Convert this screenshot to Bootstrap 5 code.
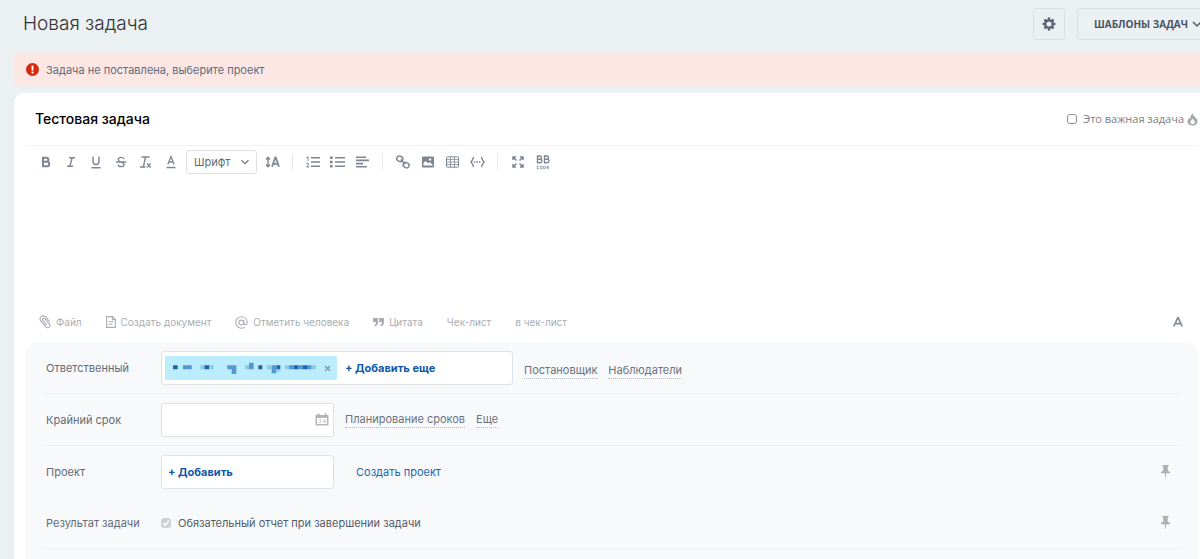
<!DOCTYPE html>
<html lang="ru">
<head>
<meta charset="utf-8">
<meta name="viewport" content="width=device-width, initial-scale=1">
<title>Новая задача</title>
<link href="https://cdn.jsdelivr.net/npm/bootstrap@5.3.0/dist/css/bootstrap.min.css" rel="stylesheet">
<style>
body{background:#ebf0f3;font-family:Inter,"Liberation Sans",sans-serif;font-size:11px;line-height:16px;color:#636a78;overflow-x:hidden}
.page-head{height:54px;padding:0 0 6px 23px}
.page-head h1{font-size:19px;line-height:28px;font-weight:300;color:#333}
.head-btn{height:32px;border:1px solid #d9dee2;border-radius:3px;padding:0;color:#525c69}
.gear-btn{width:32px;margin-right:12px}
.tpl-btn{width:132px;margin-right:-9px;padding-left:16px;font:700 10px/16px "Open Sans",sans-serif;color:#4a5363}
.notice{margin-left:14px;height:31px;padding-left:12px;gap:7px;background:#fce7e5;border-radius:4px 0 0 4px}
.task-card{margin:8px 0 0 14px;border-radius:10px 0 0 0;background:#fff}
.task-top{margin:0 2px 0 12px;padding:0 0 0 9px;height:53px;border-bottom:1px solid #f1f2f4}
.task-name{border:0;padding:0;font-size:14px;line-height:20px;font-weight:500;color:#000;background:none}
.important{font:11px/16px "Open Sans",sans-serif;color:#7d8085;padding-left:6px;gap:3px}
.tick{width:10px;height:10px;margin:0;border:1px solid #8c9096;border-radius:2px;flex:none}
.tools{padding:4px 0 0 19px}
.tool{width:25px;height:24px;padding:0;border:0;background:none;color:#7f8792;display:flex;align-items:center;justify-content:center;flex:none}
.sep{width:1px;height:16px;background:#e6e8eb;margin:0 7px}
.font-pick{width:71px;height:24px;margin:0 3px;padding:0 20px 0 7px;border:1px solid #dfe0e3;border-radius:3px;font-size:11px;line-height:16px;color:#636a78;background-size:10px 10px;background-position:right 6px center;background-image:url("data:image/svg+xml,%3csvg xmlns='http://www.w3.org/2000/svg' viewBox='0 0 10 10'%3e%3cpath fill='none' stroke='%23737b87' stroke-width='1.3' d='M1.5 3.2 5 6.7l3.5-3.5'/%3e%3c/svg%3e")}
.editor{height:140px;border:0;resize:none;padding:8px 32px;outline:0;font-size:13px}
.actions{padding:0 16px 0 25px;height:29px}
.act{padding:0;border:0;background:none;color:#a8adb4;font-size:10px;line-height:16px;display:flex;align-items:center;gap:5px;margin-right:24px;white-space:nowrap}
.fields{margin:0 2px 0 11px;padding:0 20px 16px 21px;background:#f8f9fb;border-radius:10px 10px 0 0}
.field-row{min-height:51px}
.ruled{border-bottom:1px solid #eef0f2;min-height:52px}
.first-row{min-height:51px}
.field-name{width:115px;flex:none}
.box{height:34px;border:1px solid #dfe2e6;border-radius:3px;background:#fff}
.box-wide{width:352px;padding:0 3px}
.box-short{width:173px}
.date-in{border:0;background:none;width:140px;padding:0 8px}
.add-in{padding-left:6px}
.chip{width:172px;height:24px;padding:0 6px 0 8px;background:#bcedfc;border-radius:2px}
.plain{border:0;background:none;padding:0;line-height:16px}
.add{color:#1058ad;font-weight:700;font-size:11px}
.dotted{color:#6a7280;text-decoration:none;border-bottom:1px dotted #b5bac2;line-height:15px;margin-left:11px}
.people{margin-top:6px}
.make{color:#2067b0;text-decoration:none;margin-left:22px}
.tick:disabled{opacity:1;background-color:#cfd0d2;border-color:#cfd0d2;background-size:10px 10px;background-image:url("data:image/svg+xml,%3csvg xmlns='http://www.w3.org/2000/svg' viewBox='0 0 10 10'%3e%3cpath fill='none' stroke='%23fff' stroke-width='1.4' d='M2 5.200 4.200 7.300 8 2.700'/%3e%3c/svg%3e")}
.report{color:#555c69;padding-left:7px}
.form-check-input:disabled~.report{opacity:1}
svg{display:block;flex:none}
</style>
</head>
<body>
<header class="page-head d-flex align-items-center overflow-hidden">
  <h1 class="m-0 me-auto">Новая задача</h1>
  <button class="btn head-btn gear-btn d-flex align-items-center justify-content-center flex-shrink-0" type="button" aria-label="Настройки">
    <svg width="14" height="14" viewBox="0 0 14 14" fill="none" stroke="#525c69"><circle cx="7" cy="7" r="3.7" stroke-width="2.2"/><path stroke-width="2.4" d="M7 .6v2M7 11.4v2M.6 7h2M11.4 7h2M2.5 2.5l1.3 1.3M10.2 10.2l1.3 1.3M2.5 11.5l1.3-1.3M10.2 3.8l1.3-1.3"/></svg>
  </button>
  <button class="btn head-btn tpl-btn d-flex align-items-center gap-1 flex-shrink-0 text-nowrap" type="button">ШАБЛОНЫ ЗАДАЧ
    <svg width="10" height="8" viewBox="0 0 10 8" fill="none" stroke="#525c69" stroke-width="1.5"><path d="M1 2l4 4 4-4"/></svg>
  </button>
</header>

<div class="notice d-flex align-items-center" role="alert">
  <svg width="13" height="13" viewBox="0 0 13 13"><circle cx="6.500" cy="6.500" r="6.500" fill="#d7290b"/><path stroke="#fff" stroke-width="1.900" d="M6.500 2.500v5M6.500 8.600v1.900"/></svg>
  <span>Задача не поставлена, выберите проект</span>
</div>

<main class="task-card">
  <div class="task-top d-flex align-items-center">
    <input class="task-name flex-grow-1" type="text" value="Тестовая задача" aria-label="Название задачи">
    <input class="form-check-input tick" type="checkbox" id="imp">
    <label class="important d-flex align-items-center" for="imp">Это важная задача
      <svg width="11" height="13" viewBox="0 0 11 13"><path fill="#a5a9ae" fill-rule="evenodd" d="M5.800.5C6 2.500 7.200 3.200 8.500 4.500c1.200 1.200 2 2.300 2 4C10.500 11 8.300 12.700 5.500 12.700S.5 11 .5 8.500c0-1.500.8-2.800 1.700-3.700.2.800.5 1.200 1 1.500C3 4 3.800 1.600 5.800.5zM5.700 5.600C5.200 7 3.400 7.700 3.400 9.300c0 1.300 1 2 2.200 2s2.200-.7 2.200-2c0-1.500-1.700-2.200-2.100-3.700z"/></svg>
    </label>
  </div>

  <div class="tools d-flex align-items-center" role="toolbar" aria-label="Форматирование">
    <button class="tool" type="button" aria-label="Полужирный"><svg width="10" height="12" viewBox="0 0 10 12" fill="none" stroke="currentColor" stroke-width="2"><path d="M2 1.800h3.400a2 2 0 0 1 0 4H2zM2 5.800h4a2.200 2.200 0 0 1 0 4.400H2z"/></svg></button>
    <button class="tool" type="button" aria-label="Курсив"><svg width="10" height="12" viewBox="0 0 10 12" fill="none" stroke="currentColor" stroke-width="1.400"><path d="M3 1.700h6M1 10.300h6M6.200 1.700L3.800 10.300"/></svg></button>
    <button class="tool" type="button" aria-label="Подчёркнутый"><svg width="10" height="14" viewBox="0 0 10 14" fill="none" stroke="currentColor" stroke-width="1.400"><path d="M2 1.500v5a3 3 0 0 0 6 0v-5M.5 12.700h9"/></svg></button>
    <button class="tool" type="button" aria-label="Зачёркнутый"><svg width="10" height="12" viewBox="0 0 10 12" fill="none" stroke="currentColor" stroke-width="1.300"><path d="M8 3C7.500 1.800 6.500 1.400 5 1.400 3.200 1.400 2.200 2.300 2.200 3.500 2.200 4.700 3 5.300 5 6c2 .5 3 1 3 2.400 0 1.400-1.200 2.200-3 2.200S2.200 9.900 2 8.600M0 6h10"/></svg></button>
    <button class="tool" type="button" aria-label="Очистить формат"><svg width="13" height="14" viewBox="0 0 13 14" fill="none" stroke="currentColor" stroke-width="1.400"><path d="M2.500 2h8M6.500 2L4.500 11.500M1 12h5.500M8 8.500l3.700 4M11.700 8.500l-3.700 4"/></svg></button>
    <button class="tool" type="button" aria-label="Цвет текста"><svg width="10" height="14" viewBox="0 0 10 14" fill="none" stroke="currentColor" stroke-width="1.300"><path d="M1.800 9.500L5 1.500l3.200 8M2.900 7h4.200M.5 12.500h9"/></svg></button>
    <select class="form-select font-pick" aria-label="Шрифт"><option>Шрифт</option></select>
    <button class="tool" type="button" aria-label="Размер шрифта"><svg width="15" height="12" viewBox="0 0 15 12" fill="none" stroke="currentColor" stroke-width="1.400"><path d="M3 2v8M1 3.500L3 1.300l2 2.200M1 8.500l2 2.200 2-2.200"/><path stroke-width="1.800" d="M7 10.800L10.300 1.500h.4L14 10.800M8.200 7.900h4.600"/></svg></button>
    <span class="sep"></span>
    <button class="tool" type="button" aria-label="Нумерованный список"><svg width="14" height="12" viewBox="0 0 14 12" fill="none" stroke="currentColor" stroke-width="1.400"><path d="M5 1.700h9M5 6h9M5 10.300h9"/><path stroke-width="1" d="M.5 1.500L2 .7V5M.3 7.300h2v1.500L.6 11H3"/></svg></button>
    <button class="tool" type="button" aria-label="Маркированный список"><svg width="15" height="12" viewBox="0 0 15 12" fill="none" stroke="currentColor" stroke-width="1.400"><path d="M5 1.700h10M5 6h10M5 10.300h10"/><path stroke-width="2.600" d="M0 1.700h2.600M0 6h2.600M0 10.300h2.600"/></svg></button>
    <button class="tool" type="button" aria-label="Выравнивание"><svg width="13" height="12" viewBox="0 0 13 12" fill="none" stroke="currentColor" stroke-width="1.600"><path d="M0 1.200h10M0 4.400h13M0 7.600h7M0 10.800h11"/></svg></button>
    <span class="sep"></span>
    <button class="tool" type="button" aria-label="Ссылка"><svg width="14" height="14" viewBox="0 0 14 14" fill="none" stroke="currentColor" stroke-width="1.500"><rect x=".8" y="1.300" width="6" height="5" rx="2.400" transform="rotate(25 3.800 3.800)"/><rect x="7.100" y="7.600" width="6" height="5" rx="2.400" transform="rotate(25 10.100 10.100)"/><path d="M4.800 4.600l4.600 4.700"/></svg></button>
    <button class="tool" type="button" aria-label="Изображение"><svg width="12" height="12" viewBox="0 0 12 12"><rect y=".5" width="12" height="11" rx="1" fill="currentColor"/><path fill="#fff" d="M1.500 9.500V7l2-2 2.800 2.500L7.700 6l2.800 2.500v1zM7 2.500h2.200v2H7z"/></svg></button>
    <button class="tool" type="button" aria-label="Таблица"><svg width="13" height="12" viewBox="0 0 13 12" fill="none" stroke="currentColor"><rect x=".5" y=".8" width="12" height="10.400" rx=".8"/><path stroke-width=".8" d="M.5 3.400h12M.5 6h12M.5 8.600h12M4.500 1v10M8.500 1v10"/></svg></button>
    <button class="tool" type="button" aria-label="Код"><svg width="15" height="12" viewBox="0 0 15 12" fill="none" stroke="currentColor" stroke-width="1.500"><path d="M4 1.200C2.500 1.500 3 4.600 1 6c2 1.400 1.500 4.500 3 4.800M11 1.200c1.500.3 1 3.400 3 4.800-2 1.400-1.500 4.500-3 4.800"/><path stroke-dasharray="1.500 1" d="M4 6h7"/></svg></button>
    <span class="sep"></span>
    <button class="tool" type="button" aria-label="На весь экран"><svg width="12" height="12" viewBox="0 0 12 12" fill="none" stroke="currentColor" stroke-width="1.500"><path d="M1 4V1h3M8 1h3v3M11 8v3H8M4 11H1V8M1 1l3.500 3.500M11 1L7.500 4.500M11 11L7.500 7.500M1 11l3.500-3.500"/></svg></button>
    <button class="tool" type="button" aria-label="BB-код"><svg width="14" height="16" viewBox="0 0 14 16" fill="none" stroke="currentColor" stroke-width="1.400"><path d="M1.500 2h2.300a1.600 1.600 0 0 1 0 3.300H1.500zM1.500 5.300h2.700a1.700 1.700 0 0 1 0 3.500H1.500zM8.500 2h2.300a1.600 1.600 0 0 1 0 3.300H8.500zM8.500 5.300h2.700a1.700 1.700 0 0 1 0 3.500H8.500z"/><path stroke-width=".7" d="M3 12.200H1.200v2.600H3M4.400 12.200h1.800v2.600H4.400zM7.700 12.200h1.200l.7.700v1.200l-.7.700H7.700zM13 12.200h-1.900v2.600H13M11 13.500h1.800"/></svg></button>
  </div>

  <textarea class="editor d-block w-100" aria-label="Описание задачи"></textarea>

  <div class="actions d-flex align-items-start">
    <button class="act" type="button"><svg width="12" height="14" viewBox="0 0 12 14" fill="none" stroke="currentColor" stroke-width="1.100"><path d="M10.500 6.500L6.700 2.200C5.300.6 3.300.4 2 1.600.6 2.800.7 4.700 2 6.200l4.700 5.400c1 1.200 2.500 1.300 3.500.5 1-.9 1-2.300 0-3.500L6 3.900c-.6-.7-1.500-.8-2.100-.3-.6.600-.6 1.400 0 2.100l3.800 4.400"/></svg>Файл</button>
    <button class="act" type="button"><svg width="10" height="12" viewBox="0 0 10 12" fill="none" stroke="currentColor" stroke-width="1.100"><path d="M.6.6h6l2.800 2.800v8H.6zM6.300.6v3h3M2.500 5.700h5M2.500 8.300h4"/></svg>Создать документ</button>
    <button class="act" type="button"><svg width="13" height="13" viewBox="0 0 13 13" fill="none" stroke="currentColor" stroke-width="1.100"><circle cx="6.300" cy="6.500" r="2.400"/><path d="M8.800 4v3.600c0 1.700 3.400 1.600 3.400-1.300C12.200 3 9.700.8 6.500.8 3.200.8.800 3.300.8 6.500s2.400 5.700 5.700 5.700c1.300 0 2.500-.4 3.500-1"/></svg>Отметить человека</button>
    <button class="act" type="button"><svg width="11" height="10" viewBox="0 0 11 10" fill="currentColor"><path d="M0 1h5v4c0 2.500-1 4-3.500 4.500V8C2.500 7.500 3 6.500 3 5H0zM6 1h5v4c0 2.500-1 4-3.500 4.500V8C8.500 7.500 9 6.500 9 5H6z"/></svg>Цитата</button>
    <button class="act" type="button">Чек-лист</button>
    <button class="act me-auto" type="button">в чек-лист</button>
    <button class="plain" type="button" aria-label="Панель форматирования"><svg width="12" height="16" viewBox="0 0 12 16" fill="none" stroke="#858c97" stroke-width="1.700"><path d="M1.800 12.500L5.700 3.800h.6l3.900 8.700M3.300 9.700h5.400"/></svg></button>
  </div>

  <section class="fields">
    <div class="field-row ruled first-row d-flex align-items-center">
      <span class="field-name">Ответственный</span>
      <div class="box box-wide d-flex align-items-center">
        <div class="chip d-flex align-items-center justify-content-between flex-shrink-0">
          <svg width="144" height="12" viewBox="0 0 432 36" role="img" aria-label="Имя скрыто"><path fill="#1f62b4" d="M0 10h14v12H0zM94 10h14v12H94zM256 10h12v12h-12zM310 10h12v12h-12zM362 10h14v12h-14zM390 10h14v12h-14z"/><path fill="#5597cf" d="M30 10h26v12H30zM163 10h27v26h-14V22h-13zM228 2h14v20h-14zM296 10h14v24h-14zM348 10h14v12h-14zM376 10h14v12h-14zM404 10h12v12h-12z"/><path fill="#8cc8e9" d="M82 10h12v12H82zM108 10h14v12h-14zM216 10h12v12h-12zM282 10h14v12h-14zM336 10h12v12h-12zM416 10h12v12h-12zM310 22h12v6h-12z"/></svg>
          <button class="plain" type="button" aria-label="Удалить"><svg width="7" height="7" viewBox="0 0 7 7" stroke="#7b98a8" stroke-width="1.200"><path d="M1 1l5 5M6 1L1 6"/></svg></button>
        </div>
        <button class="plain add ms-2" type="button">+ Добавить еще</button>
      </div>
      <a class="dotted people" href="#">Постановщик</a>
      <a class="dotted people" href="#">Наблюдатели</a>
    </div>
    <div class="field-row ruled d-flex align-items-center">
      <label class="field-name" for="deadline">Крайний срок</label>
      <div class="box box-short d-flex align-items-center justify-content-between pe-1">
        <input class="date-in" id="deadline" type="text">
        <svg width="14" height="13" viewBox="0 0 14 13"><path fill="#b3b5b8" fill-rule="evenodd" d="M.5 2H2.500V.5h2V2h5V.5h2V2h2v10.500H.5zM2 5v6h10V5z"/><path fill="none" stroke="#c3c5c8" stroke-width=".8" d="M3.800 6.500H6v1.300L4 9.500h2.500M10 10V6.300L7.800 8.700H11"/></svg>
      </div>
      <a class="dotted" href="#">Планирование сроков</a>
      <a class="dotted" href="#">Еще</a>
    </div>
    <div class="field-row d-flex align-items-center">
      <span class="field-name">Проект</span>
      <div class="box box-short add-in d-flex align-items-center">
        <button class="plain add" type="button">+ Добавить</button>
      </div>
      <a class="make" href="#">Создать проект</a>
      <button class="plain ms-auto me-2" type="button" aria-label="Закрепить"><svg width="9" height="13" viewBox="0 0 9 13"><path fill="#adafb3" d="M1.500 0h6v1.500h-.8v4L9 7v1.200H5.200L4.700 13h-.4l-.5-4.800H0V7l2.300-1.500v-4h-.8z"/></svg></button>
    </div>
    <div class="field-row ruled d-flex align-items-center">
      <span class="field-name">Результат задачи</span>
      <input class="form-check-input tick" type="checkbox" id="rep" checked disabled>
      <label class="report" for="rep">Обязательный отчет при завершении задачи</label>
      <button class="plain ms-auto me-2" type="button" aria-label="Закрепить"><svg width="9" height="13" viewBox="0 0 9 13"><path fill="#adafb3" d="M1.500 0h6v1.500h-.8v4L9 7v1.200H5.200L4.700 13h-.4l-.5-4.800H0V7l2.300-1.500v-4h-.8z"/></svg></button>
    </div>
  </section>
</main>
<script src="https://cdn.jsdelivr.net/npm/bootstrap@5.3.0/dist/js/bootstrap.bundle.min.js"></script>
</body>
</html>
